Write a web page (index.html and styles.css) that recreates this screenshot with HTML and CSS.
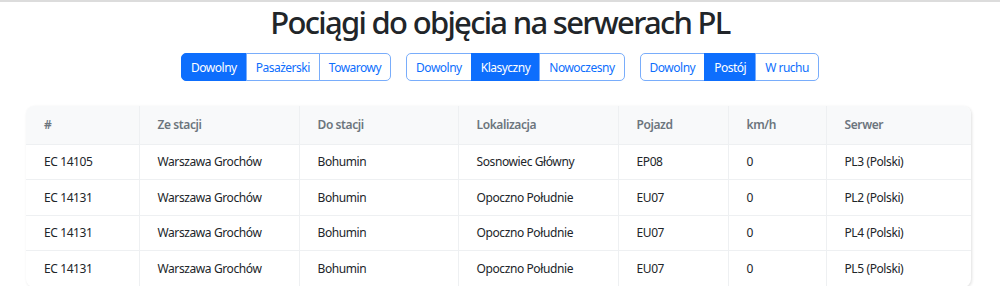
FILE: index.html
```html
<!DOCTYPE html>
<html lang="pl">
<head>
<meta charset="utf-8">
<title>Pociągi</title>
<link rel="stylesheet" href="styles.css">
</head>
<body>
<div class="topline"></div>
<h1 class="title">Pociągi do objęcia na serwerach PL</h1>
<div class="filters">
  <div class="group">
    <button class="btn active">Dowolny</button>
    <button class="btn">Pasażerski</button>
    <button class="btn">Towarowy</button>
  </div>
  <div class="group">
    <button class="btn">Dowolny</button>
    <button class="btn active">Klasyczny</button>
    <button class="btn">Nowoczesny</button>
  </div>
  <div class="group">
    <button class="btn">Dowolny</button>
    <button class="btn active">Postój</button>
    <button class="btn">W ruchu</button>
  </div>
</div>
<div class="card">
  <table class="trains">
    <colgroup>
      <col class="c1"><col class="c2"><col class="c3"><col class="c4"><col class="c5"><col class="c6"><col class="c7">
    </colgroup>
    <thead>
      <tr><th>#</th><th>Ze stacji</th><th>Do stacji</th><th>Lokalizacja</th><th>Pojazd</th><th>km/h</th><th>Serwer</th></tr>
    </thead>
    <tbody>
      <tr><td>EC 14105</td><td>Warszawa Grochów</td><td>Bohumin</td><td>Sosnowiec Główny</td><td>EP08</td><td>0</td><td>PL3 (Polski)</td></tr>
      <tr><td>EC 14131</td><td>Warszawa Grochów</td><td>Bohumin</td><td>Opoczno Południe</td><td>EU07</td><td>0</td><td>PL2 (Polski)</td></tr>
      <tr><td>EC 14131</td><td>Warszawa Grochów</td><td>Bohumin</td><td>Opoczno Południe</td><td>EU07</td><td>0</td><td>PL4 (Polski)</td></tr>
      <tr><td>EC 14131</td><td>Warszawa Grochów</td><td>Bohumin</td><td>Opoczno Południe</td><td>EU07</td><td>0</td><td>PL5 (Polski)</td></tr>
    </tbody>
  </table>
</div>
</body>
</html>
```
FILE: styles.css
```css
* { box-sizing: border-box; }
html, body { margin: 0; padding: 0; background: #fff; }
body {
  font-family: "Noto Sans", "Open Sans", sans-serif;
  color: #212529;
  overflow: hidden;
  height: 286px;
}
.topline { height: 2px; background: #dcdcdc; }
.title {
  margin: 0;
  text-align: center;
  font-size: 31px;
  font-weight: 500;
  line-height: 40px;
  color: #212529;
  letter-spacing: -1.7px;
}
.filters {
  display: flex;
  justify-content: center;
  gap: 15px;
  margin-top: 11px;
}
.group { display: flex; }
.btn {
  font-family: inherit;
  font-size: 12px;
  letter-spacing: -0.5px;
  height: 28px;
  padding: 0 9px;
  background: #fff;
  color: #0d6efd;
  border: 1px solid #79adfb;
  margin: 0;
  margin-left: -1px;
  border-radius: 0;
  cursor: pointer;
}
.btn:first-child { margin-left: 0; border-radius: 5px 0 0 5px; }
.btn:last-child { border-radius: 0 5px 5px 0; }
.btn.active { background: #0d6efd; color: #fff; border-color: #0d6efd; }
.card {
  margin: 25px 29px 0 26px;
  border-radius: 8px;
  box-shadow: 1px 1px 3px rgba(0,0,0,0.12);
  overflow: hidden;
  background: #fff;
}
.trains {
  width: 100%;
  border-collapse: collapse;
  table-layout: fixed;
  font-size: 12px;
  letter-spacing: -0.4px;
}
.c1 { width: 113px; }
.c2 { width: 160px; }
.c3 { width: 159px; }
.c4 { width: 160px; }
.c5 { width: 110px; }
.c6 { width: 98px; }
.c7 { width: 145px; }
.trains th, .trains td {
  text-align: left;
  padding: 0 18px;
  border-right: 1px solid #eef0f2;
  border-bottom: 1px solid #eef0f2;
  white-space: nowrap;
}
.trains th:last-child, .trains td:last-child { border-right: none; }
.trains th {
  height: 38px;
  background: #f8f9fa;
  color: #6c757d;
  font-weight: 600;
}
.trains td { height: 35.5px; }
```
